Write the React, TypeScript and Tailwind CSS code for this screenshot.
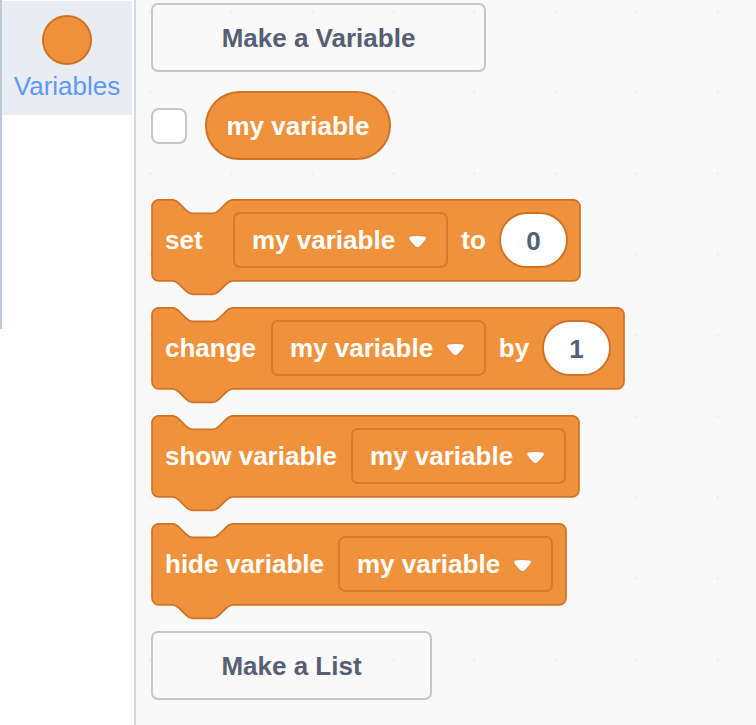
import { useId, type ReactNode } from "react";

const UNIT = 1.6875;

/* Stack block outline: notch on top, matching tab underneath. */
function StackShape({ width }: { width: number }) {
  const w = (width - 2) / UNIT;
  const d =
    `M 0 4 A 4 4 0 0 1 4 0 H 12 c 2 0 3 1 4 2 l 4 4 c 1 1 2 2 4 2 h 12 c 2 0 3 -1 4 -2 l 4 -4 c 1 -1 2 -2 4 -2 ` +
    `H ${w - 4} a 4 4 0 0 1 4 4 v 40 a 4 4 0 0 1 -4 4 ` +
    `H 48 c -2 0 -3 1 -4 2 l -4 4 c -1 1 -2 2 -4 2 h -12 c -2 0 -3 -1 -4 -2 l -4 -4 c -1 -1 -2 -2 -4 -2 H 4 a 4 4 0 0 1 -4 -4 z`;
  return (
    <svg aria-hidden="true" className="absolute left-0 top-0" width={width} height={97}>
      <g transform={`translate(1 0.8) scale(${UNIT})`}>
        <path d={d} fill="#f0923c" stroke="#cf7228" />
      </g>
    </svg>
  );
}

function VariableSelect({ label }: { label: string }) {
  return (
    <span className="relative shrink-0">
      <select
        aria-label={label}
        className="block h-14 w-[215px] appearance-none rounded-[7px] border-2 border-[#d67a2e] bg-[#f0923c] pl-[17px] pr-12 text-[26px] font-bold leading-8 text-white outline-none"
      >
        <option>my variable</option>
      </select>
      <svg
        aria-hidden="true"
        className="pointer-events-none absolute right-5 top-[23px]"
        width="20"
        height="14"
        viewBox="0 0 20 14"
      >
        <path
          d="M2.6 1 Q9.5 0 16.4 1 Q19.4 1.8 18 4.3 Q15.4 8.2 11.6 11.8 Q9.5 13.4 7.4 11.8 Q3.6 8.2 1 4.3 Q-0.4 1.8 2.6 1 Z"
          fill="#fff"
          stroke="#d67a2e"
          strokeWidth="0.8"
        />
      </svg>
    </span>
  );
}

function ValueInput({ label, value }: { label: string; value: string }) {
  return (
    <input
      aria-label={label}
      defaultValue={value}
      className="h-14 w-[69px] shrink-0 rounded-full border-2 border-[#cf7228] bg-white pt-[2px] text-center text-[26px] font-bold leading-8 text-[#575e75] outline-none"
    />
  );
}

function Block({ width, children }: { width: number; children: ReactNode }) {
  return (
    <div className="relative h-[108px]" style={{ width }}>
      <StackShape width={width} />
      <div className="relative flex h-[82px] items-center pl-[14px] text-[26px] font-bold leading-8 text-white">
        {children}
      </div>
    </div>
  );
}

export default function App() {
  const checkId = useId();
  return (
    <div className="flex min-h-screen bg-white font-['Liberation_Sans',Arial,sans-serif]">
      <nav aria-label="Categories" className="w-[136px] shrink-0 border-r-2 border-[#d9d9d9]">
        <div className="h-[329px] border-l-2 border-[#c0c7da] pt-px">
          <button
            type="button"
            className="flex h-[114px] w-[130px] flex-col items-center bg-[#e9edf2] pt-[14px]"
          >
            <span className="size-[50px] rounded-full border-2 border-[#cf7228] bg-[#f0923c]" />
            <span className="mt-[5px] text-[26px] leading-8 text-[#5c97fb]">Variables</span>
          </button>
        </div>
      </nav>
      <main className="min-w-0 flex-1 bg-[#f9f9f9] bg-[radial-gradient(circle_at_center,#f0f0f0_1px,transparent_2px)] bg-[length:81px_81px] bg-[position:-26px_-29px] pl-[15px] pt-[3px]">
        <button
          type="button"
          className="block h-[69px] w-[335px] rounded-[7px] border-2 border-[#c6c6c6] text-[26px] font-bold leading-8 text-[#575e75]"
        >
          Make a Variable
        </button>
        <div className="mt-[19px] flex h-[69px] items-center">
          <input
            id={checkId}
            type="checkbox"
            className="size-9 shrink-0 appearance-none rounded-lg border-2 border-[#c6c6c6] bg-white checked:bg-[#4c97ff]"
          />
          <label
            htmlFor={checkId}
            className="ml-[18px] flex h-[69px] w-[186px] items-center justify-center rounded-full border-2 border-[#cf7228] bg-[#f0923c] text-[26px] font-bold leading-8 text-white"
          >
            my variable
          </label>
        </div>
        <div className="mt-[39px]">
          <Block width={430}>
            <span className="w-[68px] shrink-0">set</span>
            <VariableSelect label="Variable to set" />
            <span className="w-[51px] shrink-0 text-center">to</span>
            <ValueInput label="New value" value="0" />
          </Block>
          <Block width={474}>
            <span className="w-[106px] shrink-0">change</span>
            <VariableSelect label="Variable to change" />
            <span className="w-14 shrink-0 text-center">by</span>
            <ValueInput label="Amount" value="1" />
          </Block>
          <Block width={429}>
            <span className="w-[186px] shrink-0">show variable</span>
            <VariableSelect label="Variable to show" />
          </Block>
          <Block width={416}>
            <span className="w-[173px] shrink-0">hide variable</span>
            <VariableSelect label="Variable to hide" />
          </Block>
        </div>
        <button
          type="button"
          className="block h-[69px] w-[281px] rounded-[7px] border-2 border-[#c6c6c6] text-[26px] font-bold leading-8 text-[#575e75]"
        >
          Make a List
        </button>
      </main>
    </div>
  );
}
